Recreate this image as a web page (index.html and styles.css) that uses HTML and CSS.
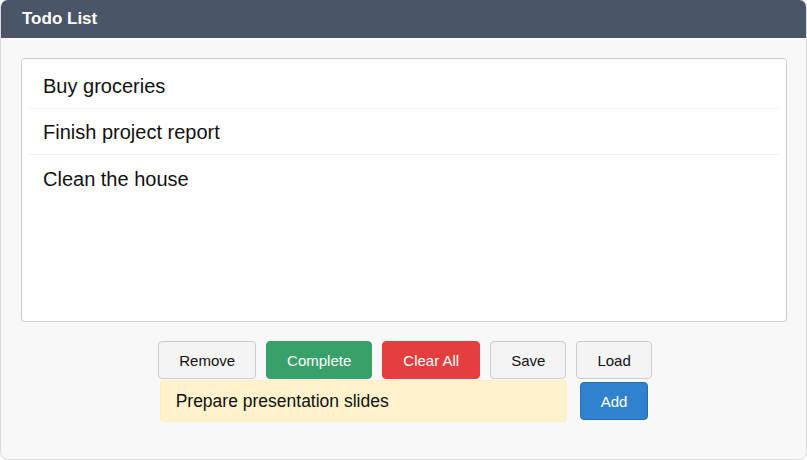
FILE: index.html
```html
<!DOCTYPE html>
<html>
<head>
<meta charset="utf-8">
<link rel="stylesheet" href="styles.css">
</head>
<body>
<div class="window">
  <div class="titlebar">Todo List</div>
  <div class="content">
    <ul class="todo-list">
      <li class="todo-item">Buy groceries</li>
      <li class="todo-item">Finish project report</li>
      <li class="todo-item">Clean the house</li>
    </ul>
    <div class="actions">
      <button class="btn btn-default">Remove</button>
      <button class="btn btn-green">Complete</button>
      <button class="btn btn-red">Clear All</button>
      <button class="btn btn-default">Save</button>
      <button class="btn btn-default">Load</button>
    </div>
    <div class="add-row">
      <input class="todo-input" type="text" value="Prepare presentation slides">
      <button class="btn btn-blue">Add</button>
    </div>
  </div>
</div>
</body>
</html>
```

FILE: styles.css
```css
* { box-sizing: border-box; }
html, body { margin: 0; padding: 0; background: #ffffff; }
body { font-family: "Liberation Sans", Arial, sans-serif; overflow: hidden; }

.window {
  margin: -1px 0 0 0;
  width: 807px;
  height: 461px;
  border: 1px solid #dcdcdc;
  border-radius: 8px;
  background: #f8f8f8;
  overflow: hidden;
  display: flex;
  flex-direction: column;
}

.titlebar {
  height: 38px;
  background: #4a5568;
  color: #ffffff;
  font-weight: bold;
  font-size: 17px;
  padding-left: 21px;
  display: flex;
  align-items: center;
}

.content {
  padding: 20px 19px 0 20px;
  display: flex;
  flex-direction: column;
}

.todo-list {
  list-style: none;
  margin: 0;
  padding: 4px 6px;
  height: 264px;
  background: #ffffff;
  border: 1px solid #cccccc;
  border-radius: 4px;
}

.todo-item {
  font-size: 20px;
  color: #111111;
  padding: 12px 15px 10px;
  line-height: 23px;
  border-bottom: 1px solid #eeeeee;
  border-radius: 4px;
}
.todo-item:last-child { border-bottom: none; padding-top: 13px; }

.actions {
  margin-top: 19px;
  display: flex;
  justify-content: center;
  gap: 10px;
  padding-left: 2px;
}

.btn {
  height: 38px;
  padding: 0 20px;
  font-family: "Liberation Sans", Arial, sans-serif;
  font-size: 15px;
  border-radius: 4px;
  border: 1px solid #cccccc;
  cursor: pointer;
}
.btn-default { background: #f4f4f4; color: #111111; }
.btn-green { background: #38a169; border-color: #38a169; color: #ffffff; }
.btn-red { background: #e53e3e; border-color: #e53e3e; color: #ffffff; }
.btn-blue { background: #3182ce; border-color: #2b6cb0; color: #ffffff; }

.add-row {
  margin-top: 1px;
  display: flex;
  justify-content: center;
  align-items: center;
  gap: 13px;
}

.todo-input {
  width: 407px;
  height: 42px;
  padding: 0 15px;
  font-family: "Liberation Sans", Arial, sans-serif;
  font-size: 17.5px;
  color: #111111;
  background: #fff3cd;
  border: 1px solid #ffeeba;
  border-radius: 4px;
  outline: none;
}
```
